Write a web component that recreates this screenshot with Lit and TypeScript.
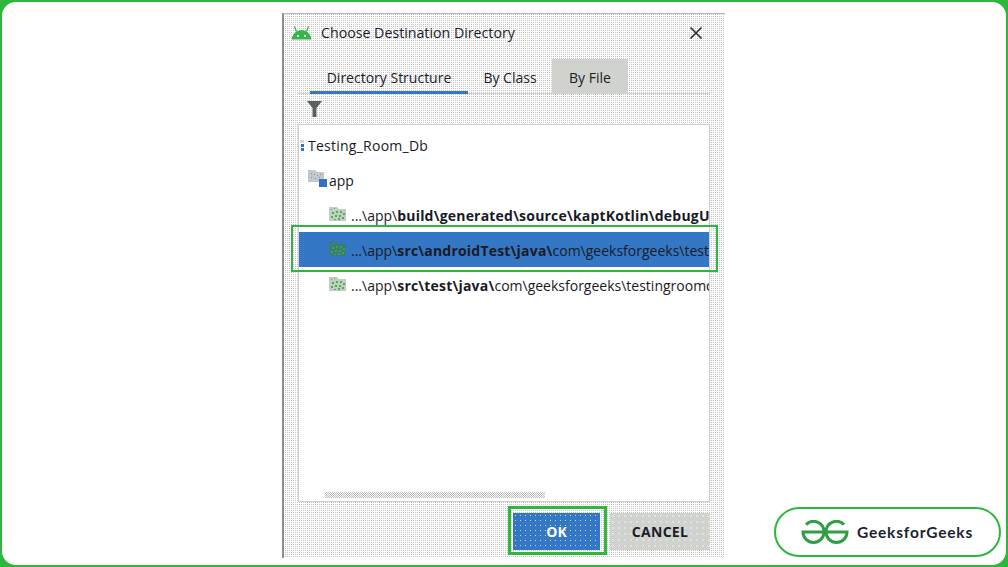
import { LitElement, html, css, svg } from "lit";
import { customElement } from "lit/decorators.js";

const folder = (fill: string, dots: string) => svg`
  <svg class="folder" viewBox="0 0 17 14" width="17" height="14">
    <path d="M0 0h8l2 2h7v12H0z" fill="${fill}"/>
    <path d="M2 2h1v1H2zM5 1h1v1H5zM3 5h2v2H3zM7 4h2v2H7zM11 4h2v2h-2zM14 6h2v2h-2zM2 9h2v2H2zM6 8h2v2H6zM10 8h2v2h-2zM13 10h2v2h-2zM5 12h2v1H5zM9 11h2v2H9z" fill="${dots}"/>
  </svg>`;

@customElement("app-root")
export class AppRoot extends LitElement {
  static styles = css`
    :host {
      display: block;
      width: 1008px;
      height: 567px;
      overflow: hidden;
      background: #2db83d;
      font-family: "Open Sans", "Noto Sans", sans-serif;
      color: #1c1c2a;
    }
    .frame {
      position: relative;
      box-sizing: border-box;
      width: 1008px;
      height: 567px;
      border: 2px solid #2db83d;
      border-radius: 16px;
      background: #fff;
      padding: 11px 281px 7px 280px;
    }
    .dialog {
      box-sizing: border-box;
      height: 100%;
      width: 443px;
      display: flex;
      flex-direction: column;
      border-top: 1px solid #b5b5b5;
      border-left: 2px solid #8d8d8d;
      background-color: #fff;
      background-image: conic-gradient(#c6c6c6 25%, #fff 0);
      background-size: 2px 2px;
      padding: 0 15px 0 14px;
    }
    .title {
      height: 37px;
      display: flex;
      align-items: center;
      gap: 9px;
      margin-left: -7px;
      font-size: 14.2px;
      flex: none;
    }
    .title span { flex: 1; }
    .close { margin-right: 7px; }
    .tabs {
      margin-top: 8px;
      height: 35px;
      flex: none;
      display: flex;
      box-sizing: border-box;
      border-bottom: 1px solid #d4d4d4;
      font-size: 14px;
    }
    .tab {
      display: flex;
      align-items: center;
      justify-content: center;
      box-sizing: border-box;
      padding-top: 3px;
    }
    .t1 { width: 158px; margin-left: 12px; border-bottom: 3px solid #3477c4; height: 35px; padding-top: 4px; }
    .t2 { width: 84px; }
    .t3 { width: 76px; background: #cfd2cd; }
    .filter { height: 30px; flex: none; display: flex; align-items: center; padding-left: 9px; }
    .list {
      flex: none;
      height: 378px;
      box-sizing: border-box;
      position: relative;
      border: 1px solid #cfcfcf;
      background: #fff;
      padding-top: 2px;
      font-size: 14px;
      white-space: nowrap;
      overflow: hidden;
    }
    .row {
      height: 35px;
      box-sizing: border-box;
      padding-top: 2px;
      display: flex;
      align-items: center;
      overflow: hidden;
      color: #1a1a26;
    }
    .row svg { flex: none; margin-top: -4px; }
    .row b { font-weight: 700; letter-spacing: 0.2px; }
    .r0 { padding-left: 1px; gap: 3px; letter-spacing: 0.25px; }
    .r1 { padding-left: 9px; gap: 2px; }
    .r2 { padding-left: 30px; gap: 5px; }
    .sel { background: #3477c4; }
    .pin { display: flex; flex-direction: column; gap: 1px; width: 5px; flex: none; }
    .pin i { display: block; width: 4px; height: 3px; background: #cfd6de; }
    .pin i + i { background: #2f74c4; width: 3px; margin-left: 1px; }
    .scroll {
      position: absolute;
      left: 26px;
      bottom: 3px;
      width: 220px;
      height: 6px;
      background-image: conic-gradient(#bdbdbd 25%, #fff 0 50%, #bdbdbd 0 75%, #fff 0);
      background-size: 2px 2px;
    }
    .buttons {
      flex: 1;
      display: flex;
      justify-content: flex-end;
      align-items: flex-start;
      padding-top: 11px;
      gap: 10px;
    }
    .btn {
      height: 37px;
      display: flex;
      align-items: center;
      justify-content: center;
      font-size: 14px;
      font-weight: 700;
      box-sizing: border-box;
    }
    .ok {
      width: 87px;
      color: #fff;
      background-color: #3477c4;
      background-image: radial-gradient(circle, #c8d8ea 0.6px, transparent 0.8px);
      background-size: 5px 5px;
    }
    .cancel {
      width: 100px;
      letter-spacing: 0.3px;
      background-color: #cfd2cd;
      background-image: radial-gradient(circle, #f4f4f2 0.6px, transparent 0.8px);
      background-size: 6px 6px;
    }
    .mark {
      position: absolute;
      box-sizing: border-box;
      border: 2px solid #2db83d;
      pointer-events: none;
    }
    .m-row { left: 289px; top: 223px; width: 427px; height: 47px; }
    .m-ok { left: 506px; top: 504px; width: 99px; height: 49px; border-width: 3px; }
    .badge {
      position: absolute;
      left: 772px;
      top: 505px;
      width: 227px;
      height: 50px;
      box-sizing: border-box;
      border: 2px solid #2db83d;
      border-radius: 25px;
      background: #fff;
      display: flex;
      align-items: center;
      padding-left: 25px;
      gap: 8px;
      font-family: "Lato", "Inter", sans-serif;
      font-weight: 700;
      font-size: 15.5px;
      letter-spacing: 0.8px;
      color: #1b1f33;
    }
  `;

  render() {
    return html`
      <div class="frame">
        <div class="dialog">
          <div class="title">
            <svg width="21" height="15" viewBox="0 0 21 15">
              <path d="M0.5 14.5C1.5 8.5 6 5 10.5 5S19.5 8.5 20.5 14.5z" fill="#38b54a"/>
              <path d="M5.5 6.5L3.5 1.5M15.5 6.5L17.5 1.5" stroke="#38b54a" stroke-width="1.3"/>
              <path d="M6 10h2v2H6zM13 10h2v2h-2z" fill="#d9e6d9"/>
            </svg>
            <span>Choose Destination Directory</span>
            <svg class="close" width="14" height="14" viewBox="0 0 14 14">
              <path d="M1.5 1.5l11 11M12.5 1.5l-11 11" stroke="#2a2a30" stroke-width="1.6"/>
            </svg>
          </div>
          <div class="tabs">
            <div class="tab t1">Directory Structure</div>
            <div class="tab t2">By Class</div>
            <div class="tab t3">By File</div>
          </div>
          <div class="filter">
            <svg width="15" height="16" viewBox="0 0 15 16">
              <path d="M0 0h15L9.5 7v9h-4V7z" fill="#5a6062"/>
            </svg>
          </div>
          <div class="list">
            <div class="row r0"><span class="pin"><i></i><i></i><i></i></span>Testing_Room_Db</div>
            <div class="row r1">
              <svg width="19" height="17" viewBox="0 0 19 17">
                <path d="M0 0h7l2 2h7v10H0z" fill="#c3c8c8"/>
                <path d="M3 3h1v1H3zM6 4h1v1H6zM9 5h1v1H9zM12 4h1v1h-1zM3 7h1v1H3zM7 8h1v1H7zM11 7h1v1h-1z" fill="#6f93bd"/>
                <path d="M11 9h8v8h-8z" fill="#2f74c4"/>
              </svg>
              app
            </div>
            <div class="row r2">${folder("#c6cbc4", "#3cb84c")}<span>...\\app\\<b>build\\generated\\source\\kaptKotlin\\debugUnitTest</b></span></div>
            <div class="row r2 sel">${folder("#3a7a78", "#3aa84a")}<span>...\\app\\<b>src\\androidTest\\java\\</b>com\\geeksforgeeks\\testingroomdb</span></div>
            <div class="row r2">${folder("#c6cbc4", "#3cb84c")}<span>...\\app\\<b>src\\test\\java\\</b>com\\geeksforgeeks\\testingroomdb</span></div>
            <div class="scroll"></div>
          </div>
          <div class="buttons">
            <div class="btn ok">OK</div>
            <div class="btn cancel">CANCEL</div>
          </div>
        </div>
        <div class="mark m-row"></div>
        <div class="mark m-ok"></div>
        <div class="badge">
          <svg width="48" height="24" viewBox="0 0 48 24" fill="none" stroke="#2f9e47" stroke-width="3">
            <path d="M5 4.6A10.5 10.5 0 0 1 23 12A10.5 10.5 0 0 1 2 12H23"/>
            <path d="M43 4.6A10.5 10.5 0 0 0 25 12A10.5 10.5 0 0 0 46 12H25"/>
          </svg>
          <span>GeeksforGeeks</span>
        </div>
      </div>
    `;
  }
}
